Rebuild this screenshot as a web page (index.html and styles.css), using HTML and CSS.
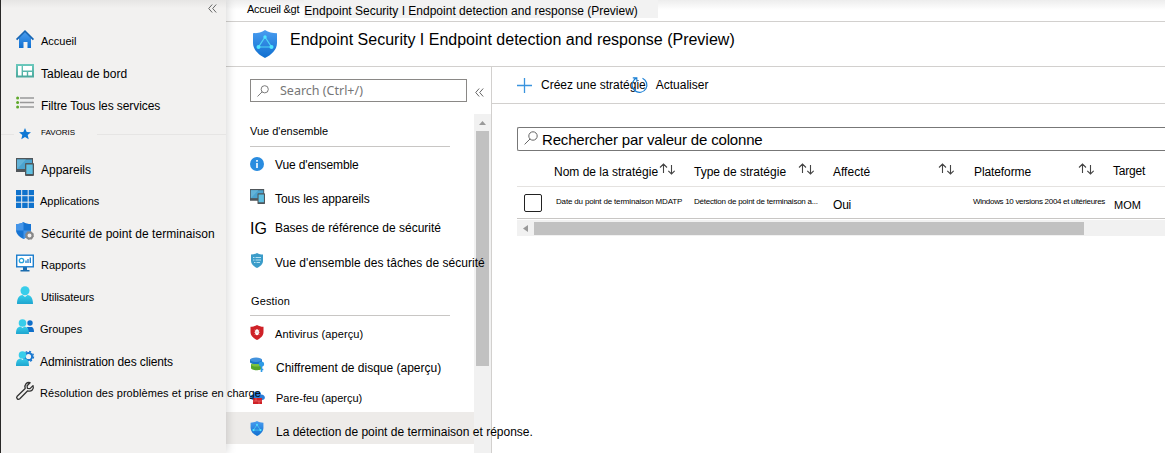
FILE: index.html
```html
<!DOCTYPE html>
<html lang="fr">
<head>
<meta charset="utf-8">
<title>Endpoint Security</title>
<link rel="stylesheet" href="styles.css">
</head>
<body>
<svg class="defs" width="0" height="0">
  <defs>
    <linearGradient id="blue" x1="0" y1="0" x2="0" y2="1"><stop offset="0" stop-color="#4a9df0"/><stop offset="1" stop-color="#0f6fd0"/></linearGradient>
    <linearGradient id="cyan" x1="0" y1="0" x2="0" y2="1"><stop offset="0" stop-color="#35cdea"/><stop offset="1" stop-color="#1fa5cf"/></linearGradient>
    <linearGradient id="teal" x1="0" y1="0" x2="0" y2="1"><stop offset="0" stop-color="#6cc9bd"/><stop offset="1" stop-color="#4aa89c"/></linearGradient>
    <symbol id="devices" viewBox="0 0 18 18"><path d="M0 0h17v12h-5v2H0z" fill="#50565a"/><path d="M1 1.500h15V11H1z" fill="#4ba3cf"/><path d="M1 11L10 1.500H1z" fill="#63b3d8"/><rect x="9" y="5" width="9" height="13" rx="1" fill="#50565a"/><path d="M10.300 6.500h6.400V16h-6.400z" fill="#5fc0e2"/></symbol>
    <symbol id="edr" viewBox="0 0 24 28"><path d="M12 0c3.500 2.600 7.500 3 12 3.200V13c0 7-6 12-12 15C6 25 0 20 0 13V3.200C4.500 3 8.500 2.600 12 0z" fill="url(#blue)"/><path d="M12 7L5.500 17h13z" fill="none" stroke="#4fd5f5" stroke-width="1.200"/><circle cx="12" cy="7" r="1.700" fill="#50e6ff"/><circle cx="5.500" cy="17" r="2" fill="#50e6ff"/><circle cx="18.500" cy="17" r="2" fill="#50e6ff"/></symbol>
    <symbol id="lens" viewBox="0 0 14 14"><circle cx="9" cy="5" r="4.200" fill="none" stroke="#666"/><path d="M6 8L.6 13.400" stroke="#666" fill="none"/></symbol>
    <symbol id="sort" viewBox="0 0 16 12"><path d="M4.500 10V1M1 4.500L4.500 1 8 4.500M12.500 2v9M9.300 7.800l3.200 3.200 3.200-3.200" fill="none" stroke="#444" stroke-width="1.100"/></symbol>
    <symbol id="chev" viewBox="0 0 9 9"><path d="M4.200.5L.7 4.500l3.500 4M8.200.5l-3.500 4 3.500 4" fill="none" stroke="#666"/></symbol>
  </defs>
</svg>
<div class="app">
  <nav class="sidebar">
    <div class="collapse"><svg width="9" height="9"><use href="#chev"/></svg></div>
    <a class="item d2"><svg width="18" height="18" viewBox="0 0 18 18"><path d="M3 8v10h4.500v-6h4v6H15V8L9 2z" fill="url(#blue)"/><path d="M.6 9.600L9 1.200l8.400 8.400" fill="none" stroke="#1565b5" stroke-width="1.800"/></svg><span class="t t1">Accueil</span></a>
    <a class="item d4"><svg width="18" height="18" viewBox="0 0 18 18"><path d="M0 2h18v13.500H0z" fill="url(#teal)"/><path d="M2 4h3.600v9.600H2zM7 4h9v4.500H7zM7 10h3.800v3.600H7zM12.200 10H16v3.600h-3.800z" fill="#fff"/></svg><span class="t t2">Tableau de bord</span></a>
    <a class="item d4"><svg width="18" height="18" viewBox="0 0 18 18"><path d="M4 4h14M4 8.500h14M4 13h14" stroke="#999" stroke-width="1.500"/><g fill="#5ea82a"><circle cx="1.600" cy="4" r="1.500"/><circle cx="1.600" cy="8.500" r="1.500"/><circle cx="1.600" cy="13" r="1.500"/></g></svg><span class="t t3">Filtre Tous les services</span></a>
    <div class="item fav"><i class="lead"></i><svg width="18" height="18" viewBox="0 0 18 18"><path d="M9 3l1.700 3.900 4.300.4-3.300 2.700 1 4.200L9 12l-3.700 2.200 1-4.200L3 7.300l4.300-.4z" fill="#0f78d4"/></svg><span class="t t4">FAVORIS</span><i></i></div>
    <a class="item d4"><svg width="18" height="18"><use href="#devices"/></svg><span class="t t5">Appareils</span></a>
    <a class="item d3"><svg width="18" height="18" viewBox="0 0 18 18"><path d="M0 0h18v18H0z" fill="#0f72cc"/><path d="M5.700 0v18M12.200 0v18M0 5.700h18M0 12.200h18" stroke="#f2f1f0"/></svg><span class="t t6">Applications</span></a>
    <a class="item d4"><svg width="18" height="18" viewBox="0 0 18 18"><path d="M7.500 0c2 1.600 4.500 2 7.500 2v6c0 4.500-4 7-7.500 9C4 15 0 12.500 0 8V2c3 0 5.500-.4 7.500-2z" fill="#1674d3"/><path d="M7.500 0v8.500H0V2c3 0 5.500-.4 7.500-2zM7.500 8.500H15c0 4-4 6.500-7.500 8.500z" fill="#4595e8"/><circle cx="13.500" cy="13.500" r="3" fill="#f2f1f0" stroke="#888" stroke-width="2"/><circle cx="13.500" cy="13.500" r="4" fill="none" stroke="#888" stroke-dasharray="1.600 1.540"/></svg><span class="t t7">Sécurité de point de terminaison</span></a>
    <a class="item d3"><svg width="18" height="18" viewBox="0 0 18 18"><path d="M7 13h4v3h2.500v1.500h-9V16H7z" fill="#1b6cae"/><rect x=".7" y="1.200" width="16.600" height="11.600" fill="#fff" stroke="#1b7dcc" stroke-width="1.400"/><circle cx="5.500" cy="6.500" r="2.200" fill="none" stroke="#25a3dc" stroke-width="1.300"/><path d="M10 9V6.500M12 9V5M14.300 9V3.500" stroke="#1b7dcc" stroke-width="1.300"/></svg><span class="t t8">Rapports</span></a>
    <a class="item d3"><svg width="18" height="18" viewBox="0 0 18 18"><path d="M1 18c0-6 2-8.500 5.500-9L9 11l2.500-2C15 9.500 17 12 17 18z" fill="url(#cyan)"/><circle cx="9" cy="4.700" r="4.500" fill="#38cdea"/></svg><span class="t t9">Utilisateurs</span></a>
    <a class="item d3"><svg width="18" height="18" viewBox="0 0 18 18"><circle cx="14" cy="5" r="2.700" fill="#0f6fc9"/><path d="M11 9h5c1.400.5 2 2.500 2 5h-6z" fill="#0f6fc9"/><path d="M0 16c0-5 1.500-7 4.500-7.500L6.500 10l2-1.500c3 .5 4.500 2.500 4.500 7.500z" fill="url(#cyan)"/><circle cx="6.500" cy="5" r="3.800" fill="#38cdea"/></svg><span class="t t10">Groupes</span></a>
    <a class="item d4"><svg width="18" height="18" viewBox="0 0 18 18"><circle cx="12.500" cy="6.500" r="3.600" fill="none" stroke="#1978d0" stroke-width="2"/><circle cx="12.500" cy="6.500" r="5" fill="none" stroke="#1978d0" stroke-width="1.400" stroke-dasharray="2 1.930"/><path d="M0 16c0-5 1.500-7 4.500-7.500L6.500 10l2-1.500c3 .5 4.500 2.500 4.500 7.500z" fill="url(#cyan)"/><circle cx="6.500" cy="5" r="3.800" fill="#38cdea"/></svg><span class="t t11">Administration des clients</span></a>
    <a class="item d2"><svg width="18" height="18" viewBox="0 0 18 18"><path d="M17 3.600l-3 3-2.600-.3-.3-2.600 3-3C11 -.2 8 2.500 9.200 6.500L1.200 14.200c-1.600 1.800.8 4.200 2.600 2.600l7.900-8C15.500 10 18.300 7 17 3.600z" fill="none" stroke="#333" stroke-width="1.300" stroke-linejoin="round"/></svg><span class="t t12">Résolution des problèmes et prise en charge</span></a>
  </nav>
  <div class="content">
    <div class="crumbs"><span class="t c1">Accueil &amp;gt</span><span class="crumb"><span class="t c2">Endpoint Security I Endpoint detection and response (Preview)</span></span></div>
    <header><svg width="24" height="28"><use href="#edr"/></svg><h1 class="t h">Endpoint Security I Endpoint detection and response (Preview)</h1></header>
    <div class="body">
      <aside>
        <div class="searchrow"><div class="search"><svg width="12" height="12"><use href="#lens"/></svg><span class="t s">Search (Ctrl+/)</span></div><svg class="ch" width="9" height="9"><use href="#chev"/></svg></div>
        <div class="menuwrap">
          <div class="menu">
            <h2><span class="t m1">Vue d'ensemble</span></h2>
            <a class="row"><svg width="14" height="14" viewBox="0 0 14 14"><circle cx="7" cy="7" r="7" fill="#2a8cdf"/><path d="M7 6v5M7 3v1.700" stroke="#fff" stroke-width="1.600"/></svg><span class="t m2">Vue d'ensemble</span></a>
            <a class="row e3"><svg width="15" height="15"><use href="#devices"/></svg><span class="t m3">Tous les appareils</span></a>
            <a class="row ig"><b class="t m0">IG</b><span class="t m4">Bases de référence de sécurité</span></a>
            <a class="row e3"><svg width="14" height="15" viewBox="0 0 14 15"><path d="M7 0c2 1.200 4 1.500 6 1.500V8c0 3.500-3 5.500-6 7-3-1.500-6-3.500-6-7V1.500C3 1.500 5 1.200 7 0z" fill="#3b9cc9"/><path d="M3 4.500h1.500M5.500 4.500H11M3 7h1.500M5.500 7H11M4 9.500h1.500M6.500 9.500H10" stroke="#b5e2f4"/></svg><span class="t m5">Vue d'ensemble des tâches de sécurité</span></a>
            <h2 class="second"><span class="t m6">Gestion</span></h2>
            <a class="row e2"><svg width="14" height="15" viewBox="0 0 14 15"><path d="M7 0c2 1.200 4 1.800 6.500 1.800V7c0 4-3.500 6.500-6.500 8C4 13.500.5 11 .5 7V1.800C3 1.800 5 1.200 7 0z" fill="#cf2127"/><ellipse cx="7" cy="7.200" rx="2" ry="3" fill="#fff"/><path d="M4.500 5l5 4.500M9.500 5l-5 4.500M4 7.300h6" stroke="#f4c9c9" stroke-width=".6"/></svg><span class="t m7">Antivirus (aperçu)</span></a>
            <a class="row e4"><svg width="15" height="15" viewBox="0 0 15 15"><path d="M1 7h11v4c0 3-11 3-11 0z" fill="#55a62a"/><ellipse cx="6.500" cy="7.500" rx="5.500" ry="2" fill="#7cc142"/><path d="M0 2.500h12V5c0 2.800-12 2.800-12 0z" fill="#1a74c8"/><ellipse cx="6" cy="2.800" rx="6" ry="2.200" fill="#4292dd"/><circle cx="11.500" cy="7" r="2.600" fill="#2f9be6"/><path d="M11.500 8v7M11.500 12.500h1.800" stroke="#2f9be6" stroke-width="1.600"/></svg><span class="t m8">Chiffrement de disque (aperçu)</span></a>
            <a class="row e2"><svg width="15" height="15" viewBox="0 0 15 15"><path d="M3 11c-4-1-3.500-5.500 0-5.500C4 1 10 1 11 5.500c5 0 5 5.500 1 5.500z" fill="#2c7dd6"/><path d="M3 9h9v6H3z" fill="#cf2127"/><path d="M3 12h9M6 9v3M9 12v3" stroke="#ef7d7d" stroke-width=".6"/></svg><span class="t m9">Pare-feu (aperçu)</span></a>
            <a class="row e4 sel"><svg width="14" height="15"><use href="#edr"/></svg><span class="t m10">La détection de point de terminaison et réponse.</span></a>
          </div>
          <div class="vbar"><svg width="7" height="4"><path d="M0 4L3.500 0 7 4z" fill="#999"/></svg><i></i></div>
        </div>
      </aside>
      <main>
        <div class="tools"><svg width="15" height="15" viewBox="0 0 15 15"><path d="M7.500 0v15M0 7.500h15" stroke="#3a94de" stroke-width="1.300"/></svg><span class="t b1">Créez une stratégie</span><svg class="refresh" width="16" height="16" viewBox="0 0 16 16"><path d="M11.500 1.200A7.400 7.400 0 1 1 3.200 2.800L5.500 .8M1.800 .8h4v4" fill="none" stroke="#1a7fd4" stroke-width="1.200"/></svg><span class="t b2">Actualiser</span></div>
        <div class="filter"><svg width="14" height="14"><use href="#lens"/></svg><span class="t f">Rechercher par valeur de colonne</span></div>
        <div class="grid head"><span></span><div class="cell"><span class="t g1">Nom de la stratégie</span><svg width="16" height="12"><use href="#sort"/></svg></div><div class="cell"><span class="t g2">Type de stratégie</span><svg width="16" height="12"><use href="#sort"/></svg></div><div class="cell"><span class="t g3">Affecté</span><svg width="16" height="12"><use href="#sort"/></svg></div><div class="cell"><span class="t g4">Plateforme</span><svg width="16" height="12"><use href="#sort"/></svg></div><div class="cell"><span class="t g5">Target</span></div></div>
        <div class="grid data"><span class="box"></span><span class="t r1">Date du point de terminaison MDATP</span><span class="t r2">Détection de point de terminaison a...</span><span class="t r3">Oui</span><span class="t r4">Windows 10 versions 2004 et ultérieures</span><span class="t r5">MOM</span></div>
        <div class="hbar"><svg width="5" height="7"><path d="M5 0v7L0 3.500z" fill="#999"/></svg><i></i></div>
      </main>
    </div>
  </div>
</div>
</body>
</html>
```
FILE: styles.css
```css
* { box-sizing: border-box; }
body { margin: 0; width: 1165px; height: 453px; overflow: hidden; background: #fff; color: #000; font: 12px/16px "Liberation Sans", Arial, sans-serif; }
.defs { position: absolute; }
svg { flex: none; display: block; overflow: visible; }
.t { white-space: nowrap; color: #000; font-weight: normal; }
.app { display: flex; height: 453px; }

/* Left navigation */
.sidebar { width: 226px; flex: none; border-left: 1px solid #292827; background: linear-gradient(#e6e5e4, #f2f1f0 8px); position: relative; z-index: 1; box-shadow: 1px 0 9px rgba(0,0,0,.17); }
.collapse { height: 23px; padding: 4px 0 0 207px; }
.item { display: flex; align-items: center; height: 32px; padding-left: 15px; gap: 7px; }
.d2 .t { padding-top: 3px; }
.d3 .t { padding-top: 4px; }
.d4 .t { padding-top: 6px; }
.fav { padding: 0 0 2px; gap: 0; }
.fav .t { font-size: 8px; margin: -2px 0 0 7px; }
.fav i { flex: 1; height: 1px; background: #e6e5e4; margin-left: 22px; }
.fav .lead { flex: 0 0 13px; margin: 0 2px 0 0; }
.t1, .t6, .t8, .t9, .t10, .t12 { font-size: 11px; }
.t3 { letter-spacing: -.08px; }
.t6, .t10, .t11, .t12 { margin-left: -1px; }
.t7 { letter-spacing: .05px; }
.t9 { letter-spacing: -.1px; }
.t11 { letter-spacing: -.12px; }
.t12 { letter-spacing: .06px; }

/* Page header */
.content { flex: 1; min-width: 0; display: flex; flex-direction: column; }
.crumbs { height: 22px; flex: none; border-bottom: 1px solid #d2d0ce; background: linear-gradient(#ededed, #fff 10px); display: flex; padding-left: 21px; align-items: flex-start; }
.c1 { font-size: 11px; padding-top: 1px; letter-spacing: -.25px; }
.crumb { height: 18px; background: #f2f2f2; padding: 3px 20px 0 0; margin-left: 5px; }
header { height: 45px; flex: none; border-bottom: 1px solid #d2d0ce; display: flex; padding: 8px 0 0 27px; gap: 13px; }
h1 { font-size: 16px; line-height: 20px; margin: 0; }
.body { flex: 1; display: flex; min-height: 0; }

/* Section menu */
aside { width: 266px; flex: none; border-right: 1px solid #d2d0ce; display: flex; flex-direction: column; }
.searchrow { display: flex; align-items: center; padding: 12px 0 12px 24px; height: 47px; }
.search { width: 217px; height: 23px; border: 1px solid #8a8886; display: flex; align-items: center; padding-left: 6px; gap: 11px; }
.s { font: 12.500px/16px "Noto Sans", sans-serif; color: #767676; }
.ch { margin: 3px 0 0 8px; }
.menuwrap { flex: 1; display: flex; min-height: 0; }
.menu { width: 248px; flex: none; }
.vbar { width: 17px; background: #f1f1f1; padding: 7px 2px 0; display: flex; flex-direction: column; align-items: center; }
.vbar i { width: 13px; height: 235px; background: #c1c1c1; margin-top: 6px; }
h2 { margin: 0 24px 1px; height: 33px; padding-top: 9px; border-bottom: 1px solid #c8c6c4; font-size: 11px; line-height: 16px; font-weight: normal; }
h2.second { height: 40px; padding: 17px 0 0 1px; margin-bottom: 0; }
.row { display: flex; align-items: center; height: 32px; padding-left: 24px; gap: 11px; position: relative; }
.row .t { padding-top: 2px; }
.row.e2 .t { padding-top: 4px; }
.row.e3 .t { padding-top: 6px; }
.row.e4 .t { padding-top: 8px; }
.sel { background: #edebe9; gap: 12px; }
.row.ig { gap: 8px; }
.ig .m0 { font-size: 16px; }
.row.ig .m4 { padding-top: 0; }
.m2 { letter-spacing: -.12px; }
.m3 { letter-spacing: -.08px; margin-left: -1px; }
.m5 { letter-spacing: .03px; }
.m6 { letter-spacing: .15px; }
.m7, .m9 { font-size: 11px; }
.m7 { letter-spacing: .12px; }

/* Policy list */
main { flex: 1; min-width: 0; }
.tools { height: 37px; border-bottom: 1px solid #d2d0ce; display: flex; align-items: center; padding-left: 25px; }
.b1 { margin-left: 9px; }
.refresh { margin-left: -15px; }
.b2 { margin-left: 9px; }
.filter { height: 24px; margin: 23px 0 0 25px; border: 1px solid #777; border-right: 0; border-radius: 2px 0 0 2px; display: flex; align-items: center; padding-left: 6px; gap: 4px; }
.filter svg { margin-bottom: 3px; }
.f { font-size: 15px; letter-spacing: -.17px; padding-top: 1px; }
.grid { display: grid; grid-template-columns: 37px 140px 139px 140px 140px 52px; margin-left: 25px; align-items: center; }
.head { height: 36px; border-bottom: 1px solid #e4e2e0; }
.cell { display: flex; align-items: center; justify-content: space-between; padding-right: 19px; }
.cell .t { padding-top: 6px; }
.cell svg { margin-top: 1px; }
.cell .g4 { margin-left: 1px; letter-spacing: -.1px; }
.cell .g5 { padding-top: 4px; letter-spacing: -.2px; }
.data { height: 32px; border-bottom: 1px solid #c8c6c4; }
.box { width: 18px; height: 18px; border: 1px solid #222; border-radius: 2px; margin-left: 7px; }
.r1, .r2, .r4 { font-size: 8px; padding-bottom: 2px; }
.r1 { margin-left: 2px; letter-spacing: -.17px; }
.r2 { letter-spacing: -.23px; }
.r3, .r5 { padding-top: 4px; }
.r3 { letter-spacing: -.2px; }
.r4 { letter-spacing: -.31px; }
.r5 { margin-left: 1px; font-size: 11px; }
.hbar { margin: 1px 0 0 25px; height: 16px; background: #f1f1f1; display: flex; align-items: center; padding-left: 6px; }
.hbar i { width: 550px; height: 13px; background: #c1c1c1; margin-left: 6px; }
```
